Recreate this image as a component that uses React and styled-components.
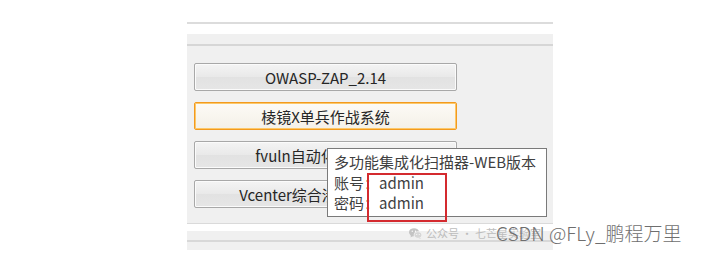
import React from "react";
import styled, { createGlobalStyle } from "styled-components";

const GlobalStyle = createGlobalStyle`
  html, body {
    margin: 0;
    padding: 0;
    background: #ffffff;
  }
  body {
    font-family: "Noto Sans CJK SC", "Noto Sans", sans-serif;
    width: 701px;
    height: 254px;
    overflow: hidden;
  }
`;

const Page = styled.div`
  position: relative;
  width: 701px;
  height: 254px;
  padding: 22px 0 0 187px;
  box-sizing: border-box;
`;

const Shot = styled.div`
  width: 366px;
  display: flex;
  flex-direction: column;
`;

const TopRule = styled.div`
  height: 2px;
  background: #dcdcdc;
  margin-bottom: 10px;
`;

const Panel = styled.div`
  background: #f0f0f0;
  height: 189px;
  display: flex;
  flex-direction: column;
  border-bottom: 1px solid #dadada;
`;

const PanelHead = styled.div`
  height: 10px;
  border-bottom: 2px solid #d6d6d6;
`;

const ButtonList = styled.div`
  display: flex;
  flex-direction: column;
  gap: 11px;
  padding: 17px 0 0 7px;
`;

const ToolButton = styled.div`
  width: 263px;
  height: 28px;
  box-sizing: border-box;
  border: 1px solid ${(p) => (p.$active ? "#f39a1e" : "#a8a8a8")};
  border-radius: 2px;
  box-shadow: inset 0 0 0 1px ${(p) => (p.$active ? "#fcc86a" : "#fbfbfb")};
  background: ${(p) =>
    p.$active
      ? "linear-gradient(#fdfbf6, #f4f0e8)"
      : "linear-gradient(#f4f4f4, #e9e9e9 50%, #e2e2e2 51%, #e6e6e6)"};
  display: flex;
  align-items: center;
  justify-content: center;
  font-size: 15px;
  color: #262626;
  white-space: nowrap;
  overflow: hidden;
`;

const Gap = styled.div`
  height: 7px;
`;

const BottomBar = styled.div`
  height: 19px;
  background: #f0f0f0;
  display: flex;
  flex-direction: column;
  justify-content: center;
`;

const BottomRule = styled.div`
  height: 2px;
  background: #d8d8d8;
  margin-top: 1px;
`;

const Tooltip = styled.div`
  position: absolute;
  left: 327px;
  top: 148px;
  width: 220px;
  height: 69px;
  box-sizing: border-box;
  background: #ffffff;
  border: 1px solid #7a7a7a;
  padding: 2px 0 0 6px;
  font-size: 15px;
  line-height: 21px;
  color: #404040;
  white-space: nowrap;
`;

const Line = styled.div`
  height: ${(p) => p.$h || 21}px;
  line-height: ${(p) => p.$h || 21}px;
`;

const RedBox = styled.div`
  position: absolute;
  left: 367px;
  top: 173px;
  width: 80px;
  height: 49px;
  box-sizing: border-box;
  border: 2px solid #d42a2f;
`;

const WeChatMark = styled.div`
  position: absolute;
  left: 409px;
  top: 225px;
  display: flex;
  align-items: center;
  gap: 4px;
  font-size: 11px;
  color: #bdbdbd;
  white-space: nowrap;
`;

const CsdnMark = styled.div`
  position: absolute;
  left: 496px;
  top: 220px;
  font-size: 19px;
  font-weight: 300;
  line-height: 26px;
  color: #6e6e6e;
  white-space: nowrap;
`;

function WeChatIcon() {
  return (
    <svg width="13" height="11" viewBox="0 0 26 22">
      <ellipse cx="10" cy="8.5" rx="10" ry="8.2" fill="#c4c4c4" />
      <path d="M4 15 L3 19 L8 16 Z" fill="#c4c4c4" />
      <ellipse cx="18" cy="14" rx="8" ry="6.8" fill="#d6d6d6" stroke="#fff" strokeWidth="1.2" />
      <path d="M22 19 L24 22 L19 20 Z" fill="#d6d6d6" />
      <circle cx="6.5" cy="6.5" r="1.3" fill="#fff" />
      <circle cx="13" cy="6.5" r="1.3" fill="#fff" />
      <circle cx="15.5" cy="13" r="1" fill="#fff" />
      <circle cx="20.5" cy="13" r="1" fill="#fff" />
    </svg>
  );
}

const tools = [
  { name: "OWASP-ZAP_2.14" },
  { name: "棱镜X单兵作战系统", active: true },
  { name: "fvuln自动化漏洞挖掘" },
  { name: "Vcenter综合渗透利用工具" },
];

export default function App() {
  return (
    <>
      <GlobalStyle />
      <Page>
        <Shot>
          <TopRule />
          <Panel>
            <PanelHead />
            <ButtonList>
              {tools.map((t) => (
                <ToolButton key={t.name} $active={t.active}>
                  {t.name}
                </ToolButton>
              ))}
            </ButtonList>
          </Panel>
          <Gap />
          <BottomBar>
            <BottomRule />
          </BottomBar>
        </Shot>
        <Tooltip>
          <Line>多功能集成化扫描器-WEB版本</Line>
          <Line>账号：admin</Line>
          <Line $h={20}>密码：admin</Line>
        </Tooltip>
        <RedBox />
        <WeChatMark>
          <WeChatIcon />
          <span>公众号 · 七芒星实验室</span>
        </WeChatMark>
        <CsdnMark>CSDN @FLy_鹏程万里</CsdnMark>
      </Page>
    </>
  );
}
